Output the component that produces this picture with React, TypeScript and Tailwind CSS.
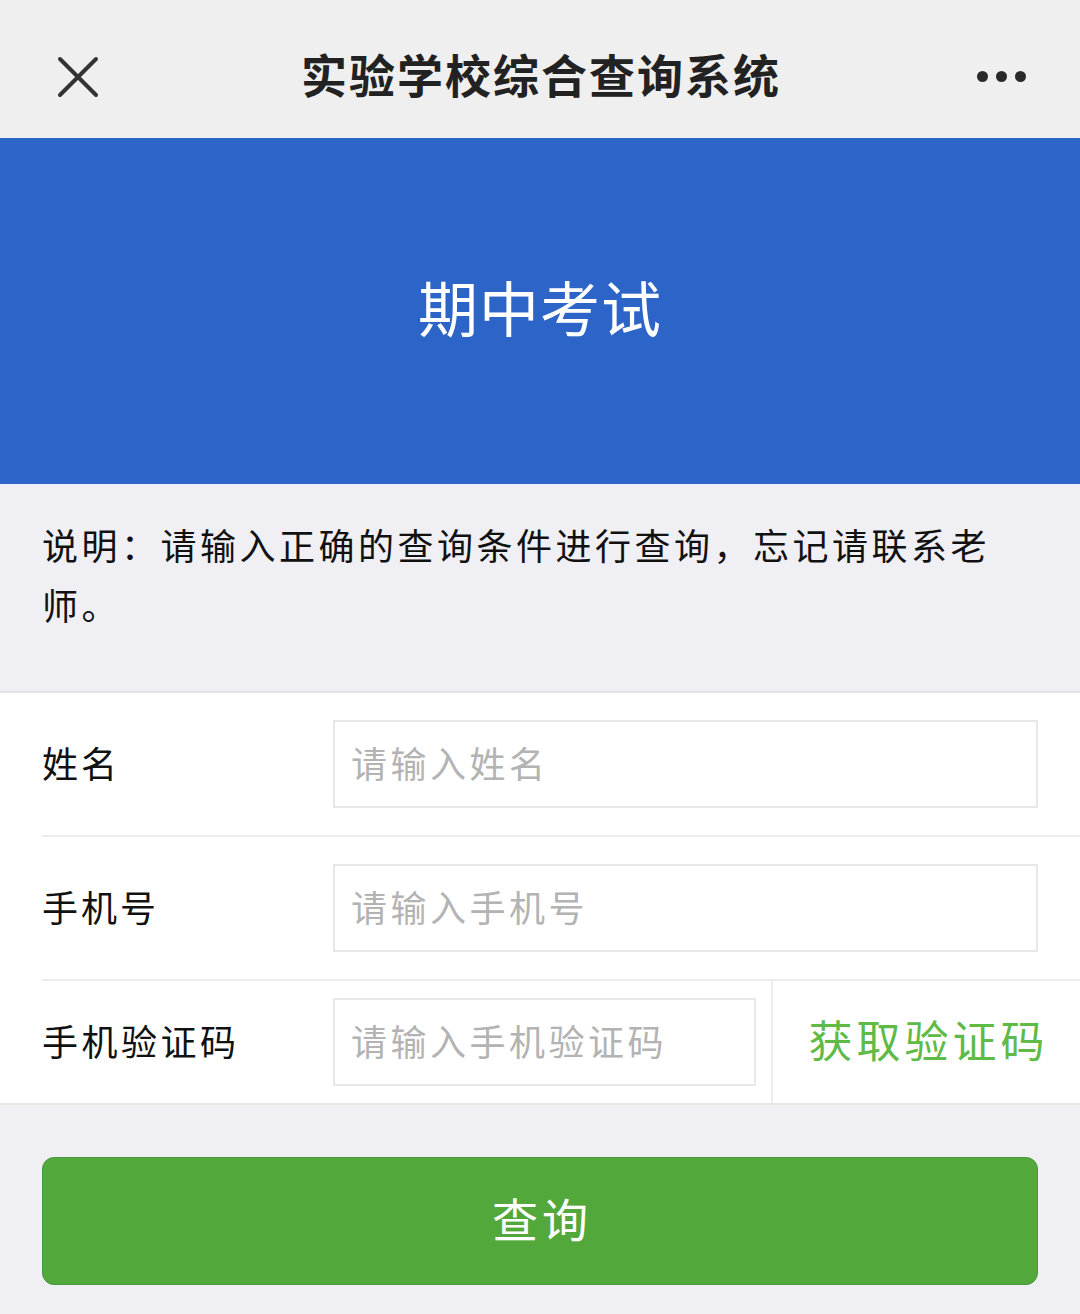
const font = { fontFamily: '"Noto Sans CJK SC", "Noto Sans", sans-serif' }

const Row = ({ label, placeholder }: { label: string; placeholder: string }) => {
  return (
    <div className="ml-[42px] h-[144px] flex items-center border-b-2 border-[#ececec]">
      <div className="w-[291px] text-[36px] tracking-[3px] text-[#111] pb-[5px]">{label}</div>
      <div className="w-[705px] h-[88px] border-2 border-[#e8e8e8] flex items-center pl-[16px] pb-[5px]">
        <span className="text-[36px] tracking-[3.5px] text-[#b3b3b3]">{placeholder}</span>
      </div>
    </div>
  )
}

const App = () => {
  return (
    <div className="w-[1080px] h-[1314px] bg-[#efeff4] flex flex-col" style={font}>
      <div className="h-[138px] bg-[#efefef] flex items-center relative">
        <svg className="absolute left-[57px] top-[56px]" width="42" height="42" viewBox="0 0 42 42">
          <path d="M3 3 L39 39 M39 3 L3 39" stroke="#333" strokeWidth="4" strokeLinecap="round" />
        </svg>
        <h1 className="w-full text-center text-[46px] font-bold tracking-[2px] text-[#222] leading-none pt-[8px] pl-[2px]">实验学校综合查询系统</h1>
        <div className="absolute left-[977px] top-[71px] flex gap-[8px]">
          <span className="w-[11px] h-[11px] rounded-full bg-[#2a2a2a]"></span>
          <span className="w-[11px] h-[11px] rounded-full bg-[#2a2a2a]"></span>
          <span className="w-[11px] h-[11px] rounded-full bg-[#2a2a2a]"></span>
        </div>
      </div>

      <div className="h-[346px] bg-[#2d64c7] flex items-center justify-center">
        <h2 className="text-[60px] text-white tracking-[1px] leading-none pb-[10px]">期中考试</h2>
      </div>

      <div className="pl-[42px] pr-[60px] pt-[30px] pb-[57px] border-b-2 border-[#e4e4e8]">
        <p className="text-[36px] leading-[60px] tracking-[3.5px] text-[#111]">说明：请输入正确的查询条件进行查询，忘记请联系老师。</p>
      </div>

      <div className="bg-white border-b-2 border-[#e6e6e6]">
        <Row label="姓名" placeholder="请输入姓名" />
        <Row label="手机号" placeholder="请输入手机号" />
        <div className="ml-[42px] h-[122px] flex items-center">
          <div className="w-[291px] text-[36px] tracking-[3.5px] text-[#111] pb-[5px]">手机验证码</div>
          <div className="w-[423px] h-[88px] border-2 border-[#e8e8e8] flex items-center pl-[16px] pb-[5px]">
            <span className="text-[36px] tracking-[3.5px] text-[#b3b3b3]">请输入手机验证码</span>
          </div>
          <div className="ml-[15px] h-full border-l-2 border-[#ececec] flex-1 flex items-center justify-center">
            <span className="text-[44px] tracking-[4px] text-[#5fba46] pl-[4px] pb-[6px]">获取验证码</span>
          </div>
        </div>
      </div>

      <div className="px-[42px] pt-[52px]">
        <button className="w-full h-[128px] bg-[#52a83a] border border-[#47983a] rounded-[12px] flex items-center justify-center">
          <span className="text-[46px] tracking-[4px] text-white pb-[8px] pl-[4px]">查询</span>
        </button>
      </div>
    </div>
  )
}

export default App
